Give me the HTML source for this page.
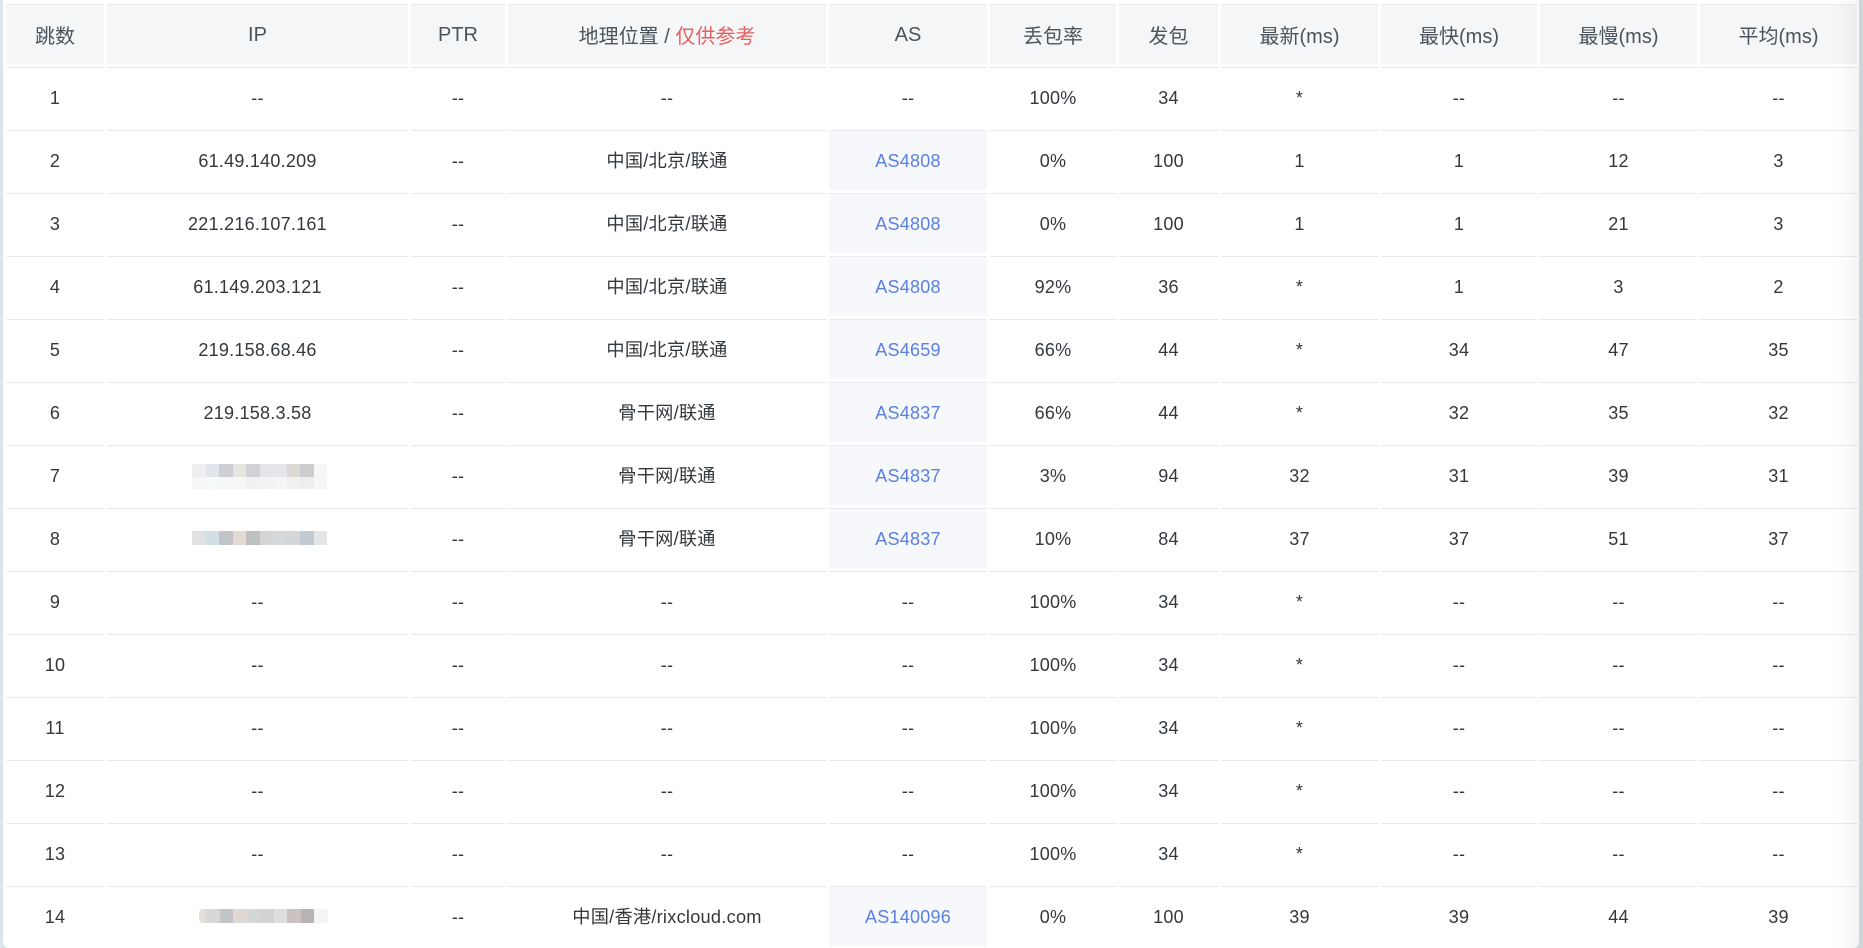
<!DOCTYPE html>
<html lang="zh-CN"><head><meta charset="utf-8"><title>路由跟踪</title>
<style>
html,body{margin:0;padding:0;width:1863px;height:948px;overflow:hidden;background:#fff}
body{position:relative;font-family:"Liberation Sans","Noto Sans CJK SC",sans-serif;color:#33383d}
table{position:absolute;left:3px;top:1px;border-collapse:separate;border-spacing:3px;table-layout:fixed;width:1857px}
th,td{box-sizing:border-box;height:60px;padding:0;border-top:1px solid #e8ebed;text-align:center;vertical-align:middle;font-weight:400;overflow:hidden;white-space:nowrap}
th{background:#f5f6f7;font-size:20px;color:#4a545c}
th.t{padding-top:2px}
td{font-size:18px;letter-spacing:.25px;padding-top:2px}
td.l{padding:0 0 2px;font-size:18.2px}
td.a{background:#f7f8fb;color:#5a80e0}
th i{font-style:normal;color:#e85f5f}
.g{position:absolute;left:0;top:0;width:3px;height:948px;background:#dde4ea}
.r{position:absolute;left:1859px;top:0;width:4px;height:948px;background:#ced6da}
.s{position:absolute;left:1835px;top:0;width:24px;height:948px;background:linear-gradient(90deg,rgba(0,0,0,0),rgba(0,0,0,.04))}
.c1{position:absolute;left:3px;top:942px;width:6px;height:6px;background:#dde4ea}
.c1:after{content:"";position:absolute;left:0;top:0;width:6px;height:6px;background:#fff;border-bottom-left-radius:6px}
.c2{position:absolute;left:1853px;top:942px;width:6px;height:6px;background:#ced6da}
.c2:after{content:"";position:absolute;left:0;top:0;width:6px;height:6px;background:#f4f5f5;border-bottom-right-radius:6px}
.b{position:absolute;display:flex}
.b span{display:block;height:100%;width:13.5px}
</style></head><body>
<div class="g"></div>
<table>
<colgroup><col style="width:98px"><col style="width:301px"><col style="width:94px"><col style="width:318px"><col style="width:158px"><col style="width:126px"><col style="width:99px"><col style="width:157px"><col style="width:156px"><col style="width:157px"><col style="width:157px"></colgroup>
<thead><tr><th>跳数</th><th class="t">IP</th><th class="t">PTR</th><th>地理位置 / <i>仅供参考</i></th><th class="t">AS</th><th>丢包率</th><th>发包</th><th>最新(ms)</th><th>最快(ms)</th><th>最慢(ms)</th><th>平均(ms)</th></tr></thead>
<tbody>
<tr><td>1</td><td>--</td><td>--</td><td>--</td><td>--</td><td>100%</td><td>34</td><td>*</td><td>--</td><td>--</td><td>--</td></tr>
<tr><td>2</td><td>61.49.140.209</td><td>--</td><td class="l">中国/北京/联通</td><td class="a">AS4808</td><td>0%</td><td>100</td><td>1</td><td>1</td><td>12</td><td>3</td></tr>
<tr><td>3</td><td>221.216.107.161</td><td>--</td><td class="l">中国/北京/联通</td><td class="a">AS4808</td><td>0%</td><td>100</td><td>1</td><td>1</td><td>21</td><td>3</td></tr>
<tr><td>4</td><td>61.149.203.121</td><td>--</td><td class="l">中国/北京/联通</td><td class="a">AS4808</td><td>92%</td><td>36</td><td>*</td><td>1</td><td>3</td><td>2</td></tr>
<tr><td>5</td><td>219.158.68.46</td><td>--</td><td class="l">中国/北京/联通</td><td class="a">AS4659</td><td>66%</td><td>44</td><td>*</td><td>34</td><td>47</td><td>35</td></tr>
<tr><td>6</td><td>219.158.3.58</td><td>--</td><td class="l">骨干网/联通</td><td class="a">AS4837</td><td>66%</td><td>44</td><td>*</td><td>32</td><td>35</td><td>32</td></tr>
<tr><td>7</td><td></td><td>--</td><td class="l">骨干网/联通</td><td class="a">AS4837</td><td>3%</td><td>94</td><td>32</td><td>31</td><td>39</td><td>31</td></tr>
<tr><td>8</td><td></td><td>--</td><td class="l">骨干网/联通</td><td class="a">AS4837</td><td>10%</td><td>84</td><td>37</td><td>37</td><td>51</td><td>37</td></tr>
<tr><td>9</td><td>--</td><td>--</td><td>--</td><td>--</td><td>100%</td><td>34</td><td>*</td><td>--</td><td>--</td><td>--</td></tr>
<tr><td>10</td><td>--</td><td>--</td><td>--</td><td>--</td><td>100%</td><td>34</td><td>*</td><td>--</td><td>--</td><td>--</td></tr>
<tr><td>11</td><td>--</td><td>--</td><td>--</td><td>--</td><td>100%</td><td>34</td><td>*</td><td>--</td><td>--</td><td>--</td></tr>
<tr><td>12</td><td>--</td><td>--</td><td>--</td><td>--</td><td>100%</td><td>34</td><td>*</td><td>--</td><td>--</td><td>--</td></tr>
<tr><td>13</td><td>--</td><td>--</td><td>--</td><td>--</td><td>100%</td><td>34</td><td>*</td><td>--</td><td>--</td><td>--</td></tr>
<tr><td>14</td><td></td><td>--</td><td class="l">中国/香港/rixcloud.com</td><td class="a">AS140096</td><td>0%</td><td>100</td><td>39</td><td>39</td><td>44</td><td>39</td></tr>
</tbody></table>
<div class="b" style="left:192px;top:464px;height:13px"><span style="background:#f0eeef"></span><span style="background:#dfe5ea"></span><span style="background:#cdced3"></span><span style="background:#e8e4e0"></span><span style="background:#d0d2d5"></span><span style="background:#e4e5e8"></span><span style="background:#e4e6e9"></span><span style="background:#dcd8d4"></span><span style="background:#cdcdcf"></span><span style="background:#f5f6f8"></span></div>
<div class="b" style="left:192px;top:477px;height:12px"><span style="background:#f6f7f8"></span><span style="background:#f7fafb"></span><span style="background:#f6f7f7"></span><span style="background:#f6f6f5"></span><span style="background:#f1f2f0"></span><span style="background:#f3f3f3"></span><span style="background:#f4f5f6"></span><span style="background:#f1f0ee"></span><span style="background:#efeeec"></span><span style="background:#f7f7f8"></span></div>
<div class="b" style="left:192px;top:531px;height:14px"><span style="background:#e1e1e3"></span><span style="background:#d4dfe5"></span><span style="background:#c1c3c6"></span><span style="background:#e2dbd3"></span><span style="background:#bdc0bf"></span><span style="background:#d3d4d8"></span><span style="background:#d5d8dc"></span><span style="background:#d4d6d7"></span><span style="background:#c1cad1"></span><span style="background:#e4e5e7"></span></div>
<div class="b" style="left:199px;top:909px;height:14px"><span style="background:#e5ded7;width:7px;border-radius:4px 0 0 4px"></span><span style="background:#d8d7d5"></span><span style="background:#c3c4c7"></span><span style="background:#e0d8d2"></span><span style="background:#d4d7d6"></span><span style="background:#d1d3d3"></span><span style="background:#dcdee0"></span><span style="background:#cbc3bf"></span><span style="background:#b7b4b3"></span><span style="background:#f4f5f7"></span></div>
<div class="s"></div>
<div class="r"></div>
<div class="c1"></div>
<div class="c2"></div>
</body></html>
